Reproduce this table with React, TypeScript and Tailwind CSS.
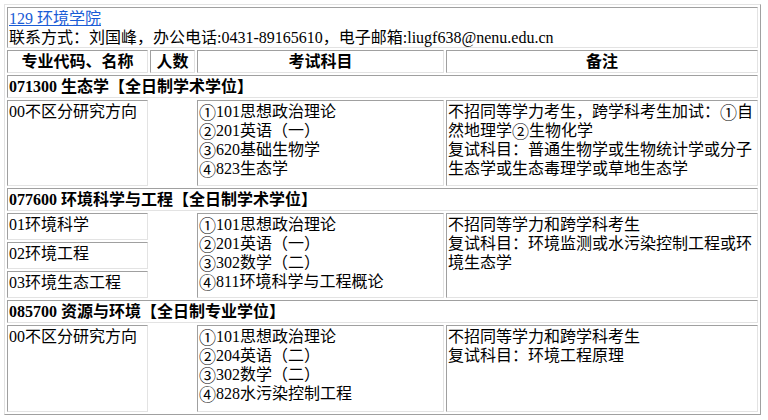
const cell =
  "border border-t-[#a0a0a0] border-l-[#a0a0a0] border-b-[#e3e3e3] border-r-[#e3e3e3] p-[1px]";

// circled digits render too small in the serif font, so force the CJK font for them
function Circ({ text }: { text: string }) {
  const parts = text.split(/([①②③④])/);
  return (
    <>
      {parts.map((p, i) =>
        /[①②③④]/.test(p) ? (
          <span
            key={i}
            className="inline-block align-top h-[19px] text-[17px] leading-[19px]"
            style={{ fontFamily: '"Noto Sans CJK SC", sans-serif' }}
          >
            {p}
          </span>
        ) : (
          <span key={i}>{p}</span>
        )
      )}
    </>
  );
}

function Lines({ lines }: { lines: string[] }) {
  return (
    <>
      {lines.map((l, i) => (
        <div key={i} className="whitespace-nowrap h-[19px]">
          <Circ text={l} />
        </div>
      ))}
    </>
  );
}

const blocks = [
  {
    title: "071300 生态学【全日制学术学位】",
    dirs: ["00不区分研究方向"],
    exams: ["①101思想政治理论", "②201英语（一）", "③620基础生物学", "④823生态学"],
    notes: [
      "不招同等学力考生，跨学科考生加试：①自",
      "然地理学②生物化学",
      "复试科目：普通生物学或生物统计学或分子",
      "生态学或生态毒理学或草地生态学",
    ],
  },
  {
    title: "077600 环境科学与工程【全日制学术学位】",
    dirs: ["01环境科学", "02环境工程", "03环境生态工程"],
    exams: ["①101思想政治理论", "②201英语（一）", "③302数学（二）", "④811环境科学与工程概论"],
    notes: ["不招同等学力和跨学科考生", "复试科目：环境监测或水污染控制工程或环", "境生态学"],
  },
  {
    title: "085700 资源与环境【全日制专业学位】",
    dirs: ["00不区分研究方向"],
    exams: ["①101思想政治理论", "②204英语（二）", "③302数学（二）", "④828水污染控制工程"],
    notes: ["不招同等学力和跨学科考生", "复试科目：环境工程原理"],
  },
];

export default function App() {
  return (
    <div
      className="w-[768px] h-[420px] overflow-hidden bg-white text-black text-[16px] leading-[19px] pt-[4px] pl-[4px]"
      style={{ fontFamily: '"Liberation Serif", "Noto Sans CJK SC", serif' }}
    >
      <div className="w-[757px] border border-t-[#e3e3e3] border-l-[#e3e3e3] border-b-[#a0a0a0] border-r-[#a0a0a0] p-[2px]">
        <div className="grid grid-cols-[141px_45px_247px_312px] gap-[2px]">
          {/* 学院信息 */}
          <div className={`${cell} col-span-4 h-[41px]`}>
            <a href="#" className="text-[#1a5cd6] underline">
              129 环境学院
            </a>
            <div>联系方式：刘国峰，办公电话:0431-89165610，电子邮箱:liugf638@nenu.edu.cn</div>
          </div>

          {/* 表头 */}
          {["专业代码、名称", "人数", "考试科目", "备注"].map((h) => (
            <div key={h} className={`${cell} h-[23px] font-bold text-center`}>
              {h}
            </div>
          ))}

          {blocks.map((b, bi) => {
            const rowH = b.dirs.length > 1 ? "h-[27px]" : bi === 0 ? "h-[86px]" : "h-[87px]";
            const span = b.dirs.length > 1 ? "row-span-3" : "";
            return (
              <div key={b.title} className="contents">
                <div className={`${cell} col-span-4 h-[23px] font-bold`}>{b.title}</div>
                {b.dirs.map((d, di) => (
                  <div key={d} className="contents">
                    <div className={`${cell} ${rowH}`}>{d}</div>
                    <div className={rowH} />
                    {di === 0 && (
                      <>
                        <div className={`${cell} ${span}`}>
                          <Lines lines={b.exams} />
                        </div>
                        <div className={`${cell} ${span}`}>
                          <Lines lines={b.notes} />
                        </div>
                      </>
                    )}
                  </div>
                ))}
              </div>
            );
          })}
        </div>
      </div>
    </div>
  );
}
